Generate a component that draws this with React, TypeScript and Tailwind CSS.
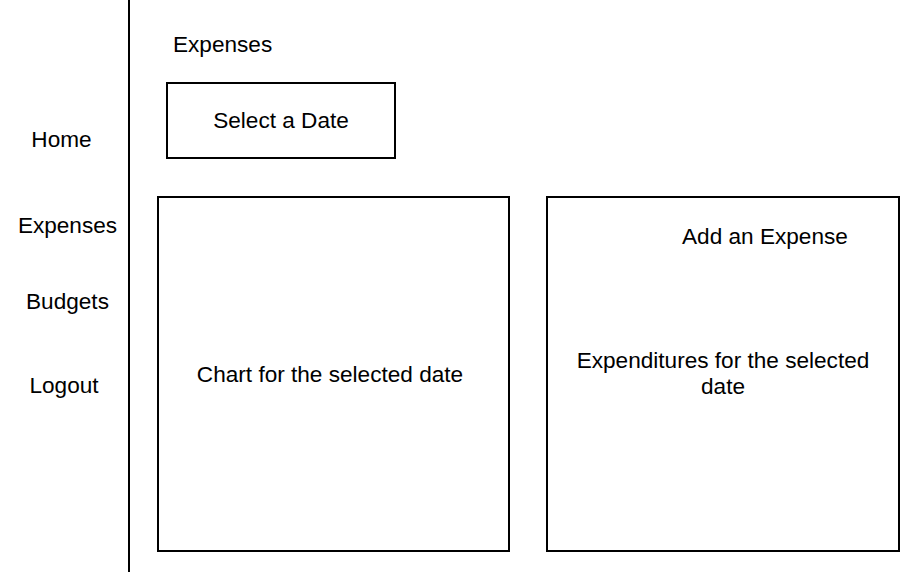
export default function App() {
  return (
    <div
      className="flex h-[572px] w-[924px] bg-white text-[22.6px] leading-[22px] text-black"
      style={{ fontFamily: '"Liberation Sans", Arial, Helvetica, sans-serif' }}
    >
      <nav className="flex w-[130px] shrink-0 flex-col border-r-2 border-black pt-[129px]">
        <div className="pr-[5px] text-center">Home</div>
        <div className="mt-[64px] pl-[7px] text-center">Expenses</div>
        <div className="mt-[54px] pl-[7px] text-center">Budgets</div>
        <div className="mt-[62px] text-center">Logout</div>
      </nav>
      <main className="flex flex-1 flex-col">
        <div className="mt-[34px] pl-[43px]">Expenses</div>
        <div className="ml-[36px] mt-[26px] flex h-[77px] w-[230px] items-center justify-center border-2 border-black pt-[1px]">
          Select a Date
        </div>
        <div className="ml-[27px] mt-[37px] flex gap-[36px]">
          <div className="flex h-[356px] w-[353px] items-center justify-center border-2 border-black pr-[7px] pt-[1px]">
            Chart for the selected date
          </div>
          <div className="flex h-[356px] w-[354px] flex-col border-2 border-black">
            <div className="mt-[28px] pl-[134px]">Add an Expense</div>
            <div className="mx-auto mt-[100px] w-[310px] text-center leading-[26px]">
              Expenditures for the selected date
            </div>
          </div>
        </div>
      </main>
    </div>
  );
}
